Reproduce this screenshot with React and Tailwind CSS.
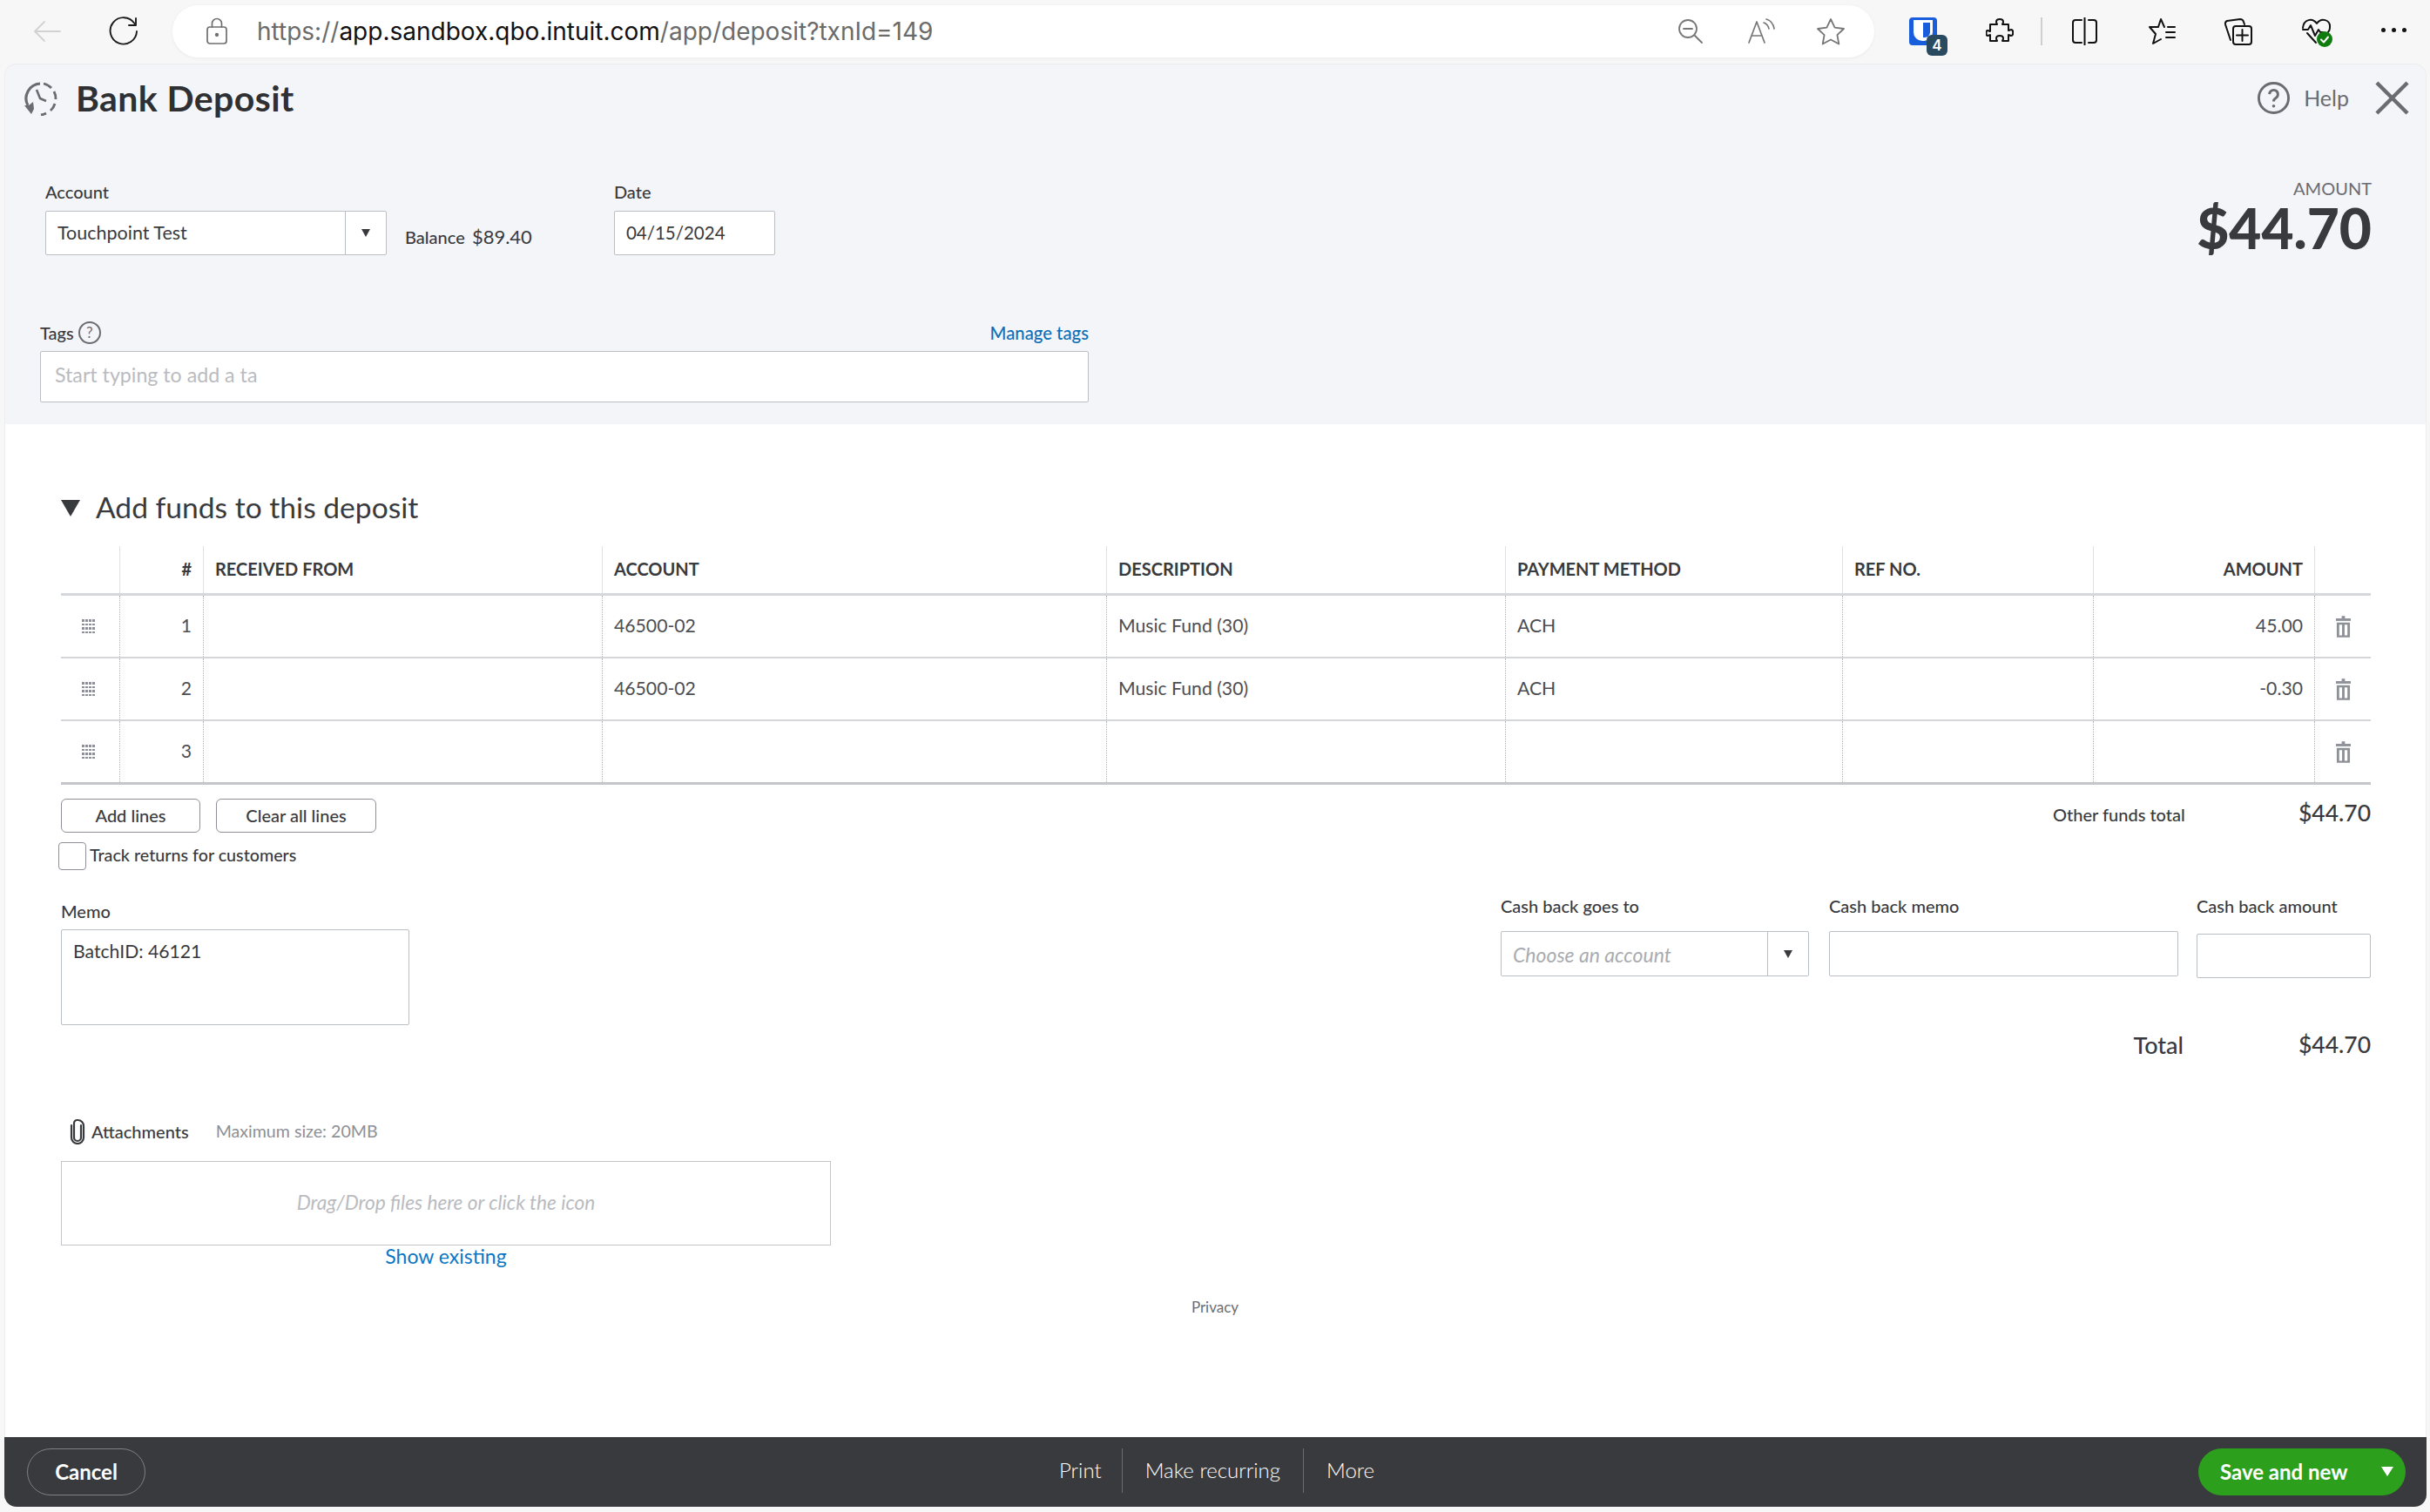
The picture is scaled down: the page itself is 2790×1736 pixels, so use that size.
import React from "react";

const COLS = "grid grid-cols-[67px_96px_458px_579px_458px_387px_288px_254px_65px]";

function Stroke({ className, children, vb = "0 0 32 32", sw = 2, color = "currentColor" }) {
  return (
    <svg viewBox={vb} className={className} fill="none" stroke={color} strokeWidth={sw} strokeLinecap="round" strokeLinejoin="round">
      {children}
    </svg>
  );
}

function Toolbar() {
  return (
    <div className="h-[73px] flex items-start bg-[#f7f7f7]">
      <div className="flex items-center h-[72px] shrink-0">
        <Stroke className="w-[32px] h-[26px] ml-[38px] text-[#d2d2d2]" vb="0 0 32 26" sw={1.8}>
          <path d="M31 13H2M13 2 2 13l11 11" />
        </Stroke>
        <Stroke className="w-[34px] h-[34px] ml-[55px] text-[#1a1a1a]" vb="0 0 34 34" sw={1.9}>
          <path d="M29.5 8A15.2 15.2 0 1 0 32 17" />
          <path d="M31 2v8h-8" />
        </Stroke>
      </div>
      <div className="ml-[39px] mt-[6px] w-[1954px] h-[60px] rounded-[30px] bg-white shadow-[0_1px_4px_rgba(0,0,0,0.05)] flex items-center">
        <Stroke className="w-[26px] h-[32px] ml-[38px] text-[#6f6f6f]" vb="0 0 26 32" sw={1.7}>
          <rect x="2" y="11" width="22" height="19" rx="3" />
          <path d="M7.5 11V7a5.5 5.5 0 0 1 11 0v4" />
          <circle cx="13" cy="20" r="1.3" fill="currentColor" />
        </Stroke>
        <div className="ml-[33px] text-[28px] leading-none font-[Inter] text-[#6b6b6b] whitespace-nowrap">
          https://<span className="text-[#111111]">app.sandbox.qbo.intuit.com</span>/app/deposit?txnId=149
        </div>
        <div className="ml-auto flex items-center text-[#767676]">
          <Stroke className="w-[30px] h-[30px]" vb="0 0 30 30" sw={1.8}>
            <circle cx="12" cy="12" r="10" />
            <path d="M7 12h10M19.5 19.5 28 28" />
          </Stroke>
          <Stroke className="w-[32px] h-[30px] ml-[50px]" vb="0 0 32 30" sw={1.7}>
            <path d="M2 28 11 4l9 24M5.5 20h11" />
            <path d="M19 5c3 1 5 3 6 7M22 1c4 1 8 5 9 11" />
          </Stroke>
          <Stroke className="w-[34px] h-[32px] ml-[47px] mr-[33px]" vb="0 0 34 32" sw={1.8}>
            <path d="m17 2 4.6 9.6 10.4 1.4-7.6 7.2 1.9 10.3L17 25.5 7.7 30.5l1.9-10.3L2 13l10.4-1.4z" />
          </Stroke>
        </div>
      </div>
      <div className="relative ml-[40px] mt-[20px] w-[32px] h-[32px] rounded-[4px] bg-[#175ddc] flex justify-center pt-[3px]">
        <div className="w-[22px] h-[24px] bg-white rounded-b-[10px] flex justify-end pt-[3px] pr-[3px]">
          <div className="w-[8px] h-[17px] bg-[#175ddc] rounded-br-[6px]" />
        </div>
        <div className="absolute left-[20px] top-[20px] w-[24px] h-[24px] rounded-[6px] bg-[#2a4b5f] text-white text-[17px] font-semibold leading-[24px] text-center font-[Inter]">4</div>
      </div>
      <div className="flex items-start text-[#111111] mt-[20px]">
        <Stroke className="w-[32px] h-[34px] ml-[56px]" vb="0 0 32 34" sw={2}>
          <path d="M12 5c0-4 8-4 8 0 0 2-1 2-1 3h7v7c1 0 2-1 3-1 3 0 3 7 0 7-1 0-2-1-3-1v7h-7c0-1 1-1 1-3 0-4-8-4-8 0 0 2 1 2 1 3H5v-7c-1 0-1 1-3 1-2 0-2-6 0-6 2 0 2 1 3 1V8h8c0-1-1-1-1-3z" />
        </Stroke>
        <div className="ml-[31px] w-[2px] h-[32px] bg-[#cfcfcf]" />
        <Stroke className="w-[32px] h-[32px] ml-[32px]" vb="0 0 32 32" sw={2}>
          <path d="M13 3H6a3 3 0 0 0-3 3v20a3 3 0 0 0 3 3h7M21 3h6a3 3 0 0 1 3 3v20a3 3 0 0 1-3 3h-6M16.500 0v32" />
        </Stroke>
        <Stroke className="w-[34px] h-[32px] ml-[56px]" vb="0 0 34 32" sw={2}>
          <path d="M13 11 16 2l4 9M13 11H3l7 8-3 11 9-5M24 11h8M22 17h10M22 23h10" />
        </Stroke>
        <Stroke className="w-[34px] h-[34px] ml-[54px]" vb="0 0 34 34" sw={2}>
          <path d="M8 26 2 8q-.5-3 2-4l15-2q3 0 4 3l1 3" />
          <rect x="11" y="10" width="21" height="21" rx="3" />
          <path d="M21.500 14v13M15 20.500h13" />
        </Stroke>
        <div className="relative ml-[56px] w-[36px] h-[34px]">
          <Stroke className="w-[34px] h-[32px]" vb="0 0 34 32" sw={2}>
            <path d="M1 12C2 2 12 0 17 7c5-7 16-5 15 5 0 2-1 4-2 5" />
            <path d="M1 14h6l3-5 5 12 4-7 2 3h3M6 18l10 11" />
          </Stroke>
          <div className="absolute left-[17px] top-[16px] w-[18px] h-[18px] rounded-full bg-[#107c10] flex items-center justify-center">
            <Stroke className="w-[12px] h-[12px]" vb="0 0 12 12" sw={2} color="#fff">
              <path d="m2 6.500 3 3 5-6" />
            </Stroke>
          </div>
        </div>
        <div className="ml-[55px] mt-[12px] flex gap-[7px]">
          <div className="w-[5px] h-[5px] rounded-full bg-[#111]" />
          <div className="w-[5px] h-[5px] rounded-full bg-[#111]" />
          <div className="w-[5px] h-[5px] rounded-full bg-[#111]" />
        </div>
      </div>
    </div>
  );
}

function Caret({ className = "" }) {
  return <div className={`w-0 h-0 border-x-[5px] border-x-transparent border-t-[9px] border-t-[#393a3d] ${className}`} />;
}

function Header() {
  return (
    <div className="h-[414px] bg-[#f4f5f8] rounded-t-[14px] border-t border-x border-[#ecedef] flex flex-col">
      <div className="flex items-center h-[39px] mt-[19px] pl-[21px] pr-[19px]">
        <svg viewBox="0 0 40 40" className="w-[40px] h-[40px]" fill="none" stroke="#6b6c72" strokeWidth="3.2" strokeLinejoin="round">
          <path d="M5 28A17 17 0 0 1 19 3" />
          <path d="M23 3a17 17 0 0 1 9 5" strokeWidth="2.800" />
          <path d="M35 12a17 17 0 0 1 2 9" strokeWidth="2.800" />
          <path d="M36 26a17 17 0 0 1-5 8" strokeWidth="2.800" />
          <path d="M26 37a17 17 0 0 1-6 2" strokeWidth="2.800" />
          <path d="M15 10l4 10 7 3" strokeWidth="2.600" />
          <path d="M1 28h5l5-4 1 8-3 6z" fill="#6b6c72" stroke="none" />
        </svg>
        <div className="ml-[20px] text-[41px] leading-none font-bold text-[#2f3033] tracking-[0.4px]">Bank Deposit</div>
        <div className="ml-auto flex items-center">
          <svg viewBox="0 0 40 40" className="w-[39px] h-[39px]" fill="none" stroke="#6b6c72" strokeWidth="3">
            <circle cx="20" cy="20" r="17.500" />
            <path d="M15 15.500a5 5 0 1 1 7.500 4.500c-1.500 1-2.500 2-2.500 4" />
            <circle cx="20" cy="29.500" r="1.800" fill="#6b6c72" stroke="none" />
          </svg>
          <div className="ml-[15px] text-[25px] leading-none text-[#6b6c72]">Help</div>
          <svg viewBox="0 0 40 40" className="ml-[30px] w-[39px] h-[39px]" fill="none" stroke="#6b6c72" strokeWidth="4.500">
            <path d="M2 2l36 36M38 2 2 38" />
          </svg>
        </div>
      </div>
      <div className="flex items-start mt-[78px] pl-[46px] pr-[62px]">
        <div>
          <div className="text-[20px] leading-[20px] font-medium text-[#393a3d]">Account</div>
          <div className="mt-[12px] w-[392px] h-[51px] bg-white border border-[#babec5] rounded-[2px] flex">
            <div className="flex-1 pl-[13px] text-[21.500px] leading-[49px] text-[#393a3d]">Touchpoint Test</div>
            <div className="w-[47px] border-l border-[#babec5] flex items-center justify-center">
              <Caret />
            </div>
          </div>
        </div>
        <div className="ml-[21px] mt-[52px] text-[20px] leading-[20px] text-[#393a3d] whitespace-nowrap">
          <span className="font-medium">Balance</span> <span className="text-[22px] ml-[3px]">$89.40</span>
        </div>
        <div className="ml-[94px]">
          <div className="text-[20px] leading-[20px] font-medium text-[#393a3d]">Date</div>
          <div className="mt-[12px] w-[185px] h-[51px] bg-white border border-[#babec5] rounded-[2px] pl-[13px] text-[20.500px] leading-[49px] text-[#393a3d]">04/15/2024</div>
        </div>
        <div className="ml-auto flex flex-col items-end -mt-[4px]">
          <div className="text-[20px] leading-[20px] text-[#6b6c72]">AMOUNT</div>
          <div className="text-[64px] leading-[64px] font-black text-[#393a3d] mt-[4px]">$44.70</div>
        </div>
      </div>
      <div className="mt-[74px] ml-[40px] w-[1204px]">
        <div className="flex items-center h-[28px] mb-[7px]">
          <div className="text-[20px] leading-none font-medium text-[#393a3d]">Tags</div>
          <div className="ml-[5px] w-[26px] h-[26px] rounded-full border-2 border-[#6b6c72] text-[#6b6c72] text-[17px] leading-[22px] text-center">?</div>
          <div className="ml-auto text-[20.300px] leading-none font-medium text-[#0b6fb8]">Manage tags</div>
        </div>
        <div className="h-[59px] bg-white border border-[#babec5] rounded-[2px] pl-[16px] text-[23.200px] leading-[53px] text-[#b9bbbf]">Start typing to add a ta</div>
      </div>
    </div>
  );
}

function Trash() {
  return (
    <svg viewBox="0 0 18 26" className="w-[17px] h-[25px]" fill="#8d9096">
      <rect x="7" y="0" width="4" height="3" />
      <rect x="0" y="3" width="18" height="3" />
      <path fillRule="evenodd" d="M1 8h16v18H1zM4 10.500v13h3.500v-13zM10.500 10.500v13H14v-13z" />
    </svg>
  );
}

function Grip() {
  return (
    <div className="grid grid-cols-4 gap-x-[1.500px] gap-y-[2px] w-[15px]">
      {Array.from({ length: 16 }).map((_, i) => (
        <div key={i} className="w-[2.500px] h-[2.500px] bg-[#8d9096]" />
      ))}
    </div>
  );
}

const HEADS = [
  ["", ""],
  ["#", "text-right"],
  ["RECEIVED FROM", ""],
  ["ACCOUNT", ""],
  ["DESCRIPTION", ""],
  ["PAYMENT METHOD", ""],
  ["REF NO.", ""],
  ["AMOUNT", "text-right"],
  ["", ""],
];

const ROWS = [
  { n: 1, acc: "46500-02", desc: "Music Fund (30)", pay: "ACH", amt: "45.00" },
  { n: 2, acc: "46500-02", desc: "Music Fund (30)", pay: "ACH", amt: "-0.30" },
  { n: 3, acc: "", desc: "", pay: "", amt: "" },
];

function Table() {
  return (
    <div className="w-[2652px]">
      <div className={`${COLS} h-[57px] border-b-[3px] border-[#d4d7dc]`}>
        {HEADS.map(([t, a], i) => (
          <div key={i} className={`${i ? "border-l border-[#dfe1e5]" : ""} px-[13px] text-[20px] leading-[52px] font-bold text-[#393a3d] whitespace-nowrap ${a}`}>{t}</div>
        ))}
      </div>
      {ROWS.map((r, idx) => (
        <div key={r.n} className={`${COLS} ${idx === 2 ? "h-[73px] border-b-[3px] border-[#c4c6ca]" : "h-[72px] border-b-2 border-[#d4d6d9]"} text-[21.200px] text-[#4d4e52]`}>
          <div className="flex items-center justify-center pr-[4px]"><Grip /></div>
          <div className="border-l border-dotted border-[#b0b2b6] flex items-center justify-end pr-[13px]">{r.n}</div>
          <div className="border-l border-dotted border-[#b0b2b6]" />
          <div className="border-l border-dotted border-[#b0b2b6] flex items-center pl-[13px]">{r.acc}</div>
          <div className="border-l border-dotted border-[#b0b2b6] flex items-center pl-[13px]">{r.desc}</div>
          <div className="border-l border-dotted border-[#b0b2b6] flex items-center pl-[13px]">{r.pay}</div>
          <div className="border-l border-dotted border-[#b0b2b6]" />
          <div className="border-l border-dotted border-[#b0b2b6] flex items-center justify-end pr-[13px]">{r.amt}</div>
          <div className="border-l border-dotted border-[#b0b2b6] flex items-center justify-center"><Trash /></div>
        </div>
      ))}
    </div>
  );
}

function Body() {
  return (
    <div className="h-[1163px] bg-white flex flex-col pl-[64px] border-x border-[#ecedef]">
      <div className="flex items-center h-[40px] mt-[76px]">
        <div className="w-0 h-0 border-x-[11px] border-x-transparent border-t-[19px] border-t-[#393a3d]" />
        <div className="ml-[18px] text-[33.600px] leading-none text-[#393a3d]">Add funds to this deposit</div>
      </div>
      <div className="mt-[24px]"><Table /></div>
      <div className="w-[2652px] flex items-start mt-[16px]">
        <div className="w-[160px] h-[39px] border border-[#8d9096] rounded-[6px] text-[20px] leading-[37px] text-center font-medium text-[#393a3d]">Add lines</div>
        <div className="ml-[18px] w-[184px] h-[39px] border border-[#8d9096] rounded-[6px] text-[20px] leading-[37px] text-center font-medium text-[#393a3d]">Clear all lines</div>
        <div className="ml-auto mt-[8px] w-[151px] text-right text-[20px] leading-none font-medium text-[#393a3d] whitespace-nowrap">Other funds total</div>
        <div className="ml-[87px] w-[127px] text-right text-[26.500px] leading-none font-medium text-[#393a3d] mt-[3px]">$44.70</div>
      </div>
      <div className="flex items-center h-[32px] mt-[11px] -ml-[3px]">
        <div className="w-[32px] h-[32px] border border-[#8d9096] rounded-[4px]" />
        <div className="ml-[4px] text-[19.700px] leading-none font-medium text-[#393a3d] -mt-[2px]">Track returns for customers</div>
      </div>
      <div className="flex items-start mt-[30px]">
        <div>
          <div className="text-[20px] leading-[20px] font-medium text-[#393a3d] mt-[7px]">Memo</div>
          <div className="mt-[11px] w-[400px] h-[110px] border border-[#babec5] rounded-[2px] pl-[13px] pt-[11px] text-[21.200px] leading-[26px] text-[#393a3d]">BatchID: 46121</div>
        </div>
        <div className="ml-[1253px] mt-[1px] w-[999px] flex flex-col">
          <div className="flex items-start">
            <div>
              <div className="text-[20px] leading-[20px] font-medium text-[#393a3d]">Cash back goes to</div>
              <div className="mt-[19px] w-[354px] h-[52px] border border-[#babec5] rounded-[2px] flex">
                <div className="flex-1 pl-[13px] text-[23px] leading-[52px] italic text-[#a9abb0]">Choose an account</div>
                <div className="w-[47px] border-l border-[#babec5] flex items-center justify-center"><Caret /></div>
              </div>
            </div>
            <div className="ml-[23px]">
              <div className="text-[20px] leading-[20px] font-medium text-[#393a3d]">Cash back memo</div>
              <div className="mt-[19px] w-[401px] h-[52px] border border-[#babec5] rounded-[2px]" />
            </div>
            <div className="ml-[21px]">
              <div className="text-[20px] leading-[20px] font-medium text-[#393a3d]">Cash back amount</div>
              <div className="mt-[22px] w-[200px] h-[51px] border border-[#babec5] rounded-[2px]" />
            </div>
          </div>
          <div className="flex justify-end items-center mt-[63px]">
            <div className="text-[27px] leading-none font-medium text-[#393a3d]">Total</div>
            <div className="ml-[88px] w-[127px] text-right text-[26.500px] leading-none font-medium text-[#393a3d]">$44.70</div>
          </div>
        </div>
      </div>
      <div className="flex items-center h-[30px] mt-[71px]">
        <svg viewBox="0 0 18 30" className="ml-[10px] w-[18px] h-[30px]" fill="none" stroke="#393a3d" strokeWidth="2.200" strokeLinecap="round">
          <path d="M13 8v14a4 4 0 0 1-8 0V5.500a3.500 3.500 0 0 1 3.500-3.500h1A6.500 6.500 0 0 1 16 8.500V22a7 7 0 0 1-14 0V8" />
        </svg>
        <div className="ml-[7px] text-[20px] leading-none font-medium text-[#393a3d]">Attachments</div>
        <div className="ml-[31px] text-[19.600px] leading-none text-[#8d9096]">Maximum size: 20MB</div>
      </div>
      <div className="mt-[19px] w-[884px] h-[97px] border border-[#c4c6ca] flex items-center justify-center text-[22.700px] italic text-[#b9bbbf]">Drag/Drop files here or click the icon</div>
      <div className="w-[884px] text-center text-[23px] leading-[24px] text-[#0b77c5]">Show existing</div>
      <div className="w-[2650px] text-center mt-[37px] text-[17px] leading-[20px] text-[#6b6c72]">Privacy</div>
    </div>
  );
}

function Footer() {
  return (
    <div className="relative h-[80px] bg-[#393a3d] rounded-b-[14px] flex items-center pl-[26px] pr-[24px] text-white">
      <div className="w-[136px] h-[54px] -mt-[1px] rounded-[27px] border border-[#7f8085] text-[24px] font-bold leading-[52px] text-center">Cancel</div>
      <div className="absolute left-[1189px] top-[13px] flex items-stretch h-[51px] text-[24px] font-light">
        <div className="pl-[22px] pr-[23px] border-r border-[#6b6c72] leading-[49px]">Print</div>
        <div className="pl-[26px] pr-[26px] border-r border-[#6b6c72] leading-[49px]">Make recurring</div>
        <div className="pl-[26px] leading-[49px]">More</div>
      </div>
      <div className="ml-auto w-[238px] h-[54px] -mt-[1px] rounded-[27px] bg-[#2ca01c] flex items-center">
        <div className="ml-[25px] text-[24px] font-bold whitespace-nowrap">Save and new</div>
        <div className="ml-[39px] w-0 h-0 border-x-[7px] border-x-transparent border-t-[11px] border-t-white" />
      </div>
    </div>
  );
}

export default function App() {
  return (
    <div className="w-[2790px] h-[1736px] bg-[#f7f7f7] flex flex-col font-[Lato,sans-serif] overflow-hidden">
      <Toolbar />
      <div className="ml-[5px] mr-[4px] flex flex-col">
        <Header />
        <Body />
        <Footer />
      </div>
    </div>
  );
}
